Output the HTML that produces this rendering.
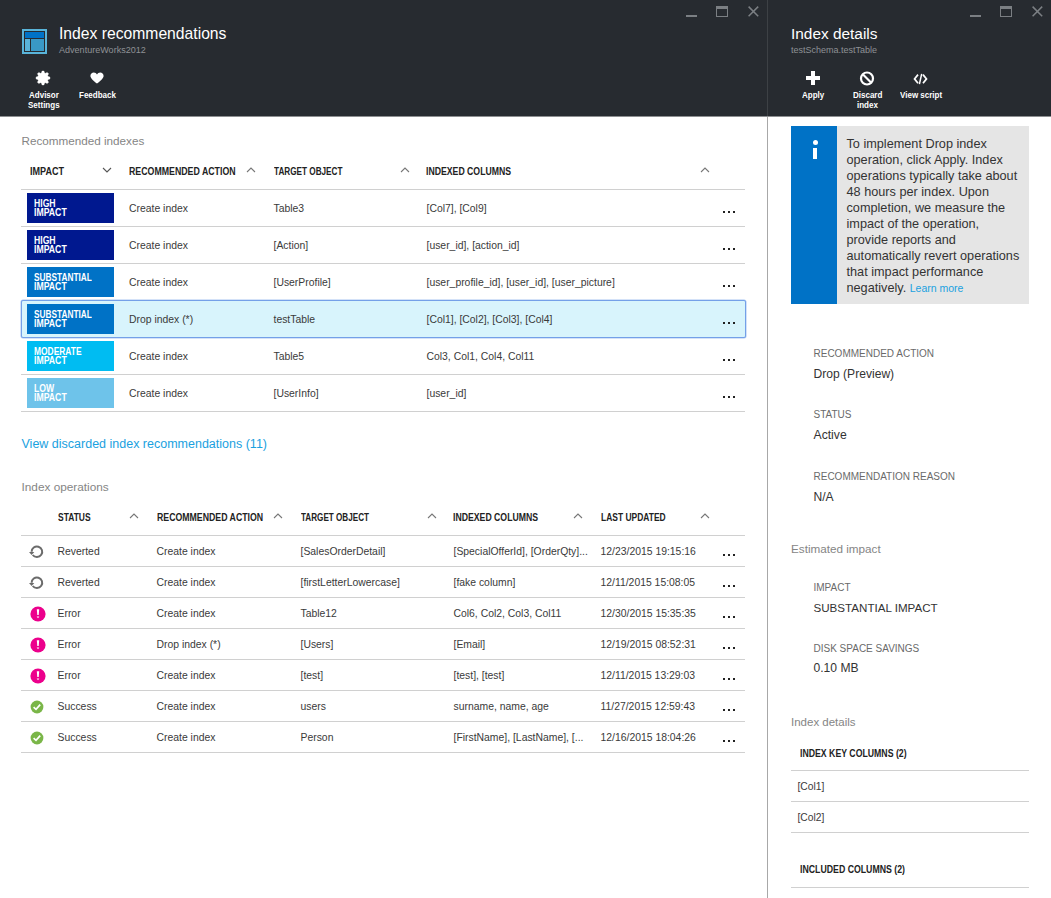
<!DOCTYPE html>
<html><head><meta charset="utf-8"><style>
html,body{margin:0;padding:0;}
body{width:1051px;height:898px;position:relative;overflow:hidden;background:#fff;font-family:"Liberation Sans", sans-serif;}
</style></head><body>
<div style="position:absolute;left:0px;top:0px;width:1051px;height:116px;background:#272b30;"></div>
<div style="position:absolute;left:0px;top:116px;width:1051px;height:1px;background:#8d8f91;"></div>
<div style="position:absolute;left:767px;top:0px;width:1px;height:116px;background:#3d4145;"></div>
<div style="position:absolute;left:767px;top:117px;width:1px;height:781px;background:#a8a8a8;"></div>
<div style="position:absolute;left:686px;top:14.8px;width:11px;height:1.8px;background:#7b7f83;"></div>
<div style="position:absolute;left:716px;top:6px;width:10px;height:6.5px;border:1.5px solid #7b7f83;border-top-width:3px"></div>
<svg style="position:absolute;left:747px;top:5px" width="13" height="13" viewBox="0 0 13 13"><path d="M1.6 1.6L11.2 11.2M11.2 1.6L1.6 11.2" stroke="#7b7f83" stroke-width="1.5"/></svg>
<div style="position:absolute;left:970px;top:14.8px;width:11px;height:1.8px;background:#7b7f83;"></div>
<div style="position:absolute;left:1000px;top:6px;width:10px;height:6.5px;border:1.5px solid #7b7f83;border-top-width:3px"></div>
<svg style="position:absolute;left:1031px;top:5px" width="13" height="13" viewBox="0 0 13 13"><path d="M1.6 1.6L11.2 11.2M11.2 1.6L1.6 11.2" stroke="#7b7f83" stroke-width="1.5"/></svg>
<svg style="position:absolute;left:22px;top:29px" width="25" height="25" viewBox="0 0 25 25">
<rect x="0" y="0" width="25" height="25" fill="#59b4d9"/>
<rect x="2" y="2" width="21" height="21" fill="#272b30"/>
<rect x="3" y="3" width="19" height="6" fill="#0072c6"/>
<rect x="3" y="10" width="5" height="12" fill="#59b4d9"/>
<rect x="9" y="10" width="13" height="12" fill="#3999c6"/>
</svg>
<div style="position:absolute;left:59px;top:25px;font-size:15.7px;line-height:17px;font-weight:400;color:#ffffff;white-space:nowrap;">Index recommendations</div>
<div style="position:absolute;left:59px;top:45px;font-size:9.05px;line-height:10px;font-weight:400;color:#8e9195;white-space:nowrap;">AdventureWorks2012</div>
<svg style="position:absolute;left:35.2px;top:69.9px" width="16" height="16" viewBox="0 0 16 16"><path fill="#fff" stroke="#fff" stroke-width="0.4" stroke-linejoin="round" d="M7.03 1.07 L8.97 1.07 L9.55 2.93 L10.49 3.32 L12.21 2.41 L13.59 3.79 L12.68 5.51 L13.07 6.45 L14.93 7.03 L14.93 8.97 L13.07 9.55 L12.68 10.49 L13.59 12.21 L12.21 13.59 L10.49 12.68 L9.55 13.07 L8.97 14.93 L7.03 14.93 L6.45 13.07 L5.51 12.68 L3.79 13.59 L2.41 12.21 L3.32 10.49 L2.93 9.55 L1.07 8.97 L1.07 7.03 L2.93 6.45 L3.32 5.51 L2.41 3.79 L3.79 2.41 L5.51 3.32 L6.45 2.93 Z"/></svg>
<svg style="position:absolute;left:90px;top:72.4px" width="14" height="13" viewBox="0 0 14 13"><path fill="#fff" d="M7 11.6 C5.2 10 0.4 6.6 0.4 3.9 C0.4 1.9 2 0.4 3.8 0.4 C5.2 0.4 6.4 1.2 7 2.4 C7.6 1.2 8.8 0.4 10.2 0.4 C12 0.4 13.6 1.9 13.6 3.9 C13.6 6.6 8.8 10 7 11.6 Z"/></svg>
<div style="position:absolute;left:28.5px;top:90px;font-size:9px;line-height:10px;font-weight:700;color:#fff;white-space:nowrap;transform:scaleX(0.89);transform-origin:0 0;">Advisor</div>
<div style="position:absolute;left:27.5px;top:100px;font-size:9px;line-height:10px;font-weight:700;color:#fff;white-space:nowrap;transform:scaleX(0.89);transform-origin:0 0;">Settings</div>
<div style="position:absolute;left:79px;top:90px;font-size:9px;line-height:10px;font-weight:700;color:#fff;white-space:nowrap;transform:scaleX(0.89);transform-origin:0 0;">Feedback</div>
<div style="position:absolute;left:791px;top:25px;font-size:15.4px;line-height:17px;font-weight:400;color:#ffffff;white-space:nowrap;">Index details</div>
<div style="position:absolute;left:791px;top:45px;font-size:9px;line-height:10px;font-weight:400;color:#8e9195;white-space:nowrap;">testSchema.testTable</div>
<div style="position:absolute;left:811.3px;top:71px;width:3.6px;height:14px;background:#fff;"></div>
<div style="position:absolute;left:806px;top:76.2px;width:14px;height:3.6px;background:#fff;"></div>
<svg style="position:absolute;left:859px;top:71px" width="16" height="15" viewBox="0 0 16 15"><circle cx="8" cy="7.5" r="6" fill="none" stroke="#fff" stroke-width="2.2"/><path d="M4 3.5L12 11.5" stroke="#fff" stroke-width="2.2"/></svg>
<svg style="position:absolute;left:913px;top:72px" width="17" height="13" viewBox="0 0 17 13"><path d="M5 2.6L1.5 6.9L5 11.2M10 2.6L13.5 6.9L10 11.2" fill="none" stroke="#fff" stroke-width="1.7"/><path d="M8.7 1.8L6.4 12.2" stroke="#fff" stroke-width="1.5"/></svg>
<div style="position:absolute;left:801.5px;top:90px;font-size:9px;line-height:10px;font-weight:700;color:#fff;white-space:nowrap;transform:scaleX(0.89);transform-origin:0 0;">Apply</div>
<div style="position:absolute;left:852.5px;top:90px;font-size:9px;line-height:10px;font-weight:700;color:#fff;white-space:nowrap;transform:scaleX(0.89);transform-origin:0 0;">Discard</div>
<div style="position:absolute;left:857px;top:100px;font-size:9px;line-height:10px;font-weight:700;color:#fff;white-space:nowrap;transform:scaleX(0.89);transform-origin:0 0;">index</div>
<div style="position:absolute;left:899.5px;top:90px;font-size:9px;line-height:10px;font-weight:700;color:#fff;white-space:nowrap;transform:scaleX(0.89);transform-origin:0 0;">View script</div>
<div style="position:absolute;left:21.5px;top:134px;font-size:11.7px;line-height:13px;font-weight:400;color:#858585;white-space:nowrap;">Recommended indexes</div>
<div style="position:absolute;left:30px;top:166px;font-size:10.0px;line-height:11px;font-weight:700;color:#222;white-space:nowrap;transform:scaleX(0.905);transform-origin:0 0;">IMPACT</div>
<svg style="position:absolute;left:102px;top:167px" width="10" height="6" viewBox="0 0 10 6"><path d="M1 1L5 5L9 1" fill="none" stroke="#555" stroke-width="1.1"/></svg>
<div style="position:absolute;left:129px;top:166px;font-size:10.0px;line-height:11px;font-weight:700;color:#222;white-space:nowrap;transform:scaleX(0.879);transform-origin:0 0;">RECOMMENDED ACTION</div>
<svg style="position:absolute;left:246px;top:167px" width="10" height="6" viewBox="0 0 10 6"><path d="M1 5L5 1L9 5" fill="none" stroke="#777" stroke-width="1.1"/></svg>
<div style="position:absolute;left:273.5px;top:166px;font-size:10.0px;line-height:11px;font-weight:700;color:#222;white-space:nowrap;transform:scaleX(0.818);transform-origin:0 0;">TARGET OBJECT</div>
<svg style="position:absolute;left:399.5px;top:167px" width="10" height="6" viewBox="0 0 10 6"><path d="M1 5L5 1L9 5" fill="none" stroke="#777" stroke-width="1.1"/></svg>
<div style="position:absolute;left:426px;top:166px;font-size:10.0px;line-height:11px;font-weight:700;color:#222;white-space:nowrap;transform:scaleX(0.87);transform-origin:0 0;">INDEXED COLUMNS</div>
<svg style="position:absolute;left:699.5px;top:167px" width="10" height="6" viewBox="0 0 10 6"><path d="M1 5L5 1L9 5" fill="none" stroke="#777" stroke-width="1.1"/></svg>
<div style="position:absolute;left:21px;top:189px;width:724px;height:1px;background:#d0d0d0;"></div>
<div style="position:absolute;left:27px;top:193px;width:87px;height:30px;background:#00188f;"></div>
<div style="position:absolute;left:34px;top:198px;font-size:10.0px;line-height:11px;font-weight:700;color:#fff;white-space:nowrap;transform:scaleX(0.864);transform-origin:0 0;">HIGH</div>
<div style="position:absolute;left:34px;top:207px;font-size:10.0px;line-height:11px;font-weight:700;color:#fff;white-space:nowrap;transform:scaleX(0.87);transform-origin:0 0;">IMPACT</div>
<div style="position:absolute;left:129px;top:203px;font-size:10.4px;line-height:11px;font-weight:400;color:#3a3a3a;white-space:nowrap;">Create index</div>
<div style="position:absolute;left:273.5px;top:203px;font-size:10.4px;line-height:11px;font-weight:400;color:#3a3a3a;white-space:nowrap;">Table3</div>
<div style="position:absolute;left:426.5px;top:203px;font-size:10.4px;line-height:11px;font-weight:400;color:#3a3a3a;white-space:nowrap;">[Col7], [Col9]</div>
<div style="position:absolute;left:722.7px;top:211px;width:2px;height:2px;background:#222;"></div>
<div style="position:absolute;left:727.7px;top:211px;width:2px;height:2px;background:#222;"></div>
<div style="position:absolute;left:732.7px;top:211px;width:2px;height:2px;background:#222;"></div>
<div style="position:absolute;left:21px;top:226px;width:724px;height:1px;background:#d0d0d0;"></div>
<div style="position:absolute;left:27px;top:230px;width:87px;height:30px;background:#00188f;"></div>
<div style="position:absolute;left:34px;top:235px;font-size:10.0px;line-height:11px;font-weight:700;color:#fff;white-space:nowrap;transform:scaleX(0.864);transform-origin:0 0;">HIGH</div>
<div style="position:absolute;left:34px;top:244px;font-size:10.0px;line-height:11px;font-weight:700;color:#fff;white-space:nowrap;transform:scaleX(0.87);transform-origin:0 0;">IMPACT</div>
<div style="position:absolute;left:129px;top:240px;font-size:10.4px;line-height:11px;font-weight:400;color:#3a3a3a;white-space:nowrap;">Create index</div>
<div style="position:absolute;left:273.5px;top:240px;font-size:10.4px;line-height:11px;font-weight:400;color:#3a3a3a;white-space:nowrap;">[Action]</div>
<div style="position:absolute;left:426.5px;top:240px;font-size:10.4px;line-height:11px;font-weight:400;color:#3a3a3a;white-space:nowrap;">[user_id], [action_id]</div>
<div style="position:absolute;left:722.7px;top:248px;width:2px;height:2px;background:#222;"></div>
<div style="position:absolute;left:727.7px;top:248px;width:2px;height:2px;background:#222;"></div>
<div style="position:absolute;left:732.7px;top:248px;width:2px;height:2px;background:#222;"></div>
<div style="position:absolute;left:21px;top:263px;width:724px;height:1px;background:#d0d0d0;"></div>
<div style="position:absolute;left:27px;top:267px;width:87px;height:30px;background:#0072c6;"></div>
<div style="position:absolute;left:34px;top:272px;font-size:10.0px;line-height:11px;font-weight:700;color:#fff;white-space:nowrap;transform:scaleX(0.82848);transform-origin:0 0;">SUBSTANTIAL</div>
<div style="position:absolute;left:34px;top:281px;font-size:10.0px;line-height:11px;font-weight:700;color:#fff;white-space:nowrap;transform:scaleX(0.87);transform-origin:0 0;">IMPACT</div>
<div style="position:absolute;left:129px;top:277px;font-size:10.4px;line-height:11px;font-weight:400;color:#3a3a3a;white-space:nowrap;">Create index</div>
<div style="position:absolute;left:273.5px;top:277px;font-size:10.4px;line-height:11px;font-weight:400;color:#3a3a3a;white-space:nowrap;">[UserProfile]</div>
<div style="position:absolute;left:426.5px;top:277px;font-size:10.4px;line-height:11px;font-weight:400;color:#3a3a3a;white-space:nowrap;">[user_profile_id], [user_id], [user_picture]</div>
<div style="position:absolute;left:722.7px;top:285px;width:2px;height:2px;background:#222;"></div>
<div style="position:absolute;left:727.7px;top:285px;width:2px;height:2px;background:#222;"></div>
<div style="position:absolute;left:732.7px;top:285px;width:2px;height:2px;background:#222;"></div>
<div style="position:absolute;left:21px;top:300px;width:723px;height:36px;background:#d8f4fc;border:1px solid #74a0e8;box-shadow:0 0 0 0.5px #a9c6f2;border-radius:2px"></div>
<div style="position:absolute;left:27px;top:304px;width:87px;height:30px;background:#0072c6;"></div>
<div style="position:absolute;left:34px;top:309px;font-size:10.0px;line-height:11px;font-weight:700;color:#fff;white-space:nowrap;transform:scaleX(0.82848);transform-origin:0 0;">SUBSTANTIAL</div>
<div style="position:absolute;left:34px;top:318px;font-size:10.0px;line-height:11px;font-weight:700;color:#fff;white-space:nowrap;transform:scaleX(0.87);transform-origin:0 0;">IMPACT</div>
<div style="position:absolute;left:129px;top:314px;font-size:10.4px;line-height:11px;font-weight:400;color:#3a3a3a;white-space:nowrap;">Drop index (*)</div>
<div style="position:absolute;left:273.5px;top:314px;font-size:10.4px;line-height:11px;font-weight:400;color:#3a3a3a;white-space:nowrap;">testTable</div>
<div style="position:absolute;left:426.5px;top:314px;font-size:10.4px;line-height:11px;font-weight:400;color:#3a3a3a;white-space:nowrap;">[Col1], [Col2], [Col3], [Col4]</div>
<div style="position:absolute;left:722.7px;top:322px;width:2px;height:2px;background:#222;"></div>
<div style="position:absolute;left:727.7px;top:322px;width:2px;height:2px;background:#222;"></div>
<div style="position:absolute;left:732.7px;top:322px;width:2px;height:2px;background:#222;"></div>
<div style="position:absolute;left:27px;top:341px;width:87px;height:30px;background:#00bcf2;"></div>
<div style="position:absolute;left:34px;top:346px;font-size:10.0px;line-height:11px;font-weight:700;color:#fff;white-space:nowrap;transform:scaleX(0.84192);transform-origin:0 0;">MODERATE</div>
<div style="position:absolute;left:34px;top:355px;font-size:10.0px;line-height:11px;font-weight:700;color:#fff;white-space:nowrap;transform:scaleX(0.87);transform-origin:0 0;">IMPACT</div>
<div style="position:absolute;left:129px;top:351px;font-size:10.4px;line-height:11px;font-weight:400;color:#3a3a3a;white-space:nowrap;">Create index</div>
<div style="position:absolute;left:273.5px;top:351px;font-size:10.4px;line-height:11px;font-weight:400;color:#3a3a3a;white-space:nowrap;">Table5</div>
<div style="position:absolute;left:426.5px;top:351px;font-size:10.4px;line-height:11px;font-weight:400;color:#3a3a3a;white-space:nowrap;">Col3, Col1, Col4, Col11</div>
<div style="position:absolute;left:722.7px;top:359px;width:2px;height:2px;background:#222;"></div>
<div style="position:absolute;left:727.7px;top:359px;width:2px;height:2px;background:#222;"></div>
<div style="position:absolute;left:732.7px;top:359px;width:2px;height:2px;background:#222;"></div>
<div style="position:absolute;left:21px;top:374px;width:724px;height:1px;background:#d0d0d0;"></div>
<div style="position:absolute;left:27px;top:378px;width:87px;height:30px;background:#6ec3ea;"></div>
<div style="position:absolute;left:34px;top:383px;font-size:10.0px;line-height:11px;font-weight:700;color:#fff;white-space:nowrap;transform:scaleX(0.864);transform-origin:0 0;">LOW</div>
<div style="position:absolute;left:34px;top:392px;font-size:10.0px;line-height:11px;font-weight:700;color:#fff;white-space:nowrap;transform:scaleX(0.87);transform-origin:0 0;">IMPACT</div>
<div style="position:absolute;left:129px;top:388px;font-size:10.4px;line-height:11px;font-weight:400;color:#3a3a3a;white-space:nowrap;">Create index</div>
<div style="position:absolute;left:273.5px;top:388px;font-size:10.4px;line-height:11px;font-weight:400;color:#3a3a3a;white-space:nowrap;">[UserInfo]</div>
<div style="position:absolute;left:426.5px;top:388px;font-size:10.4px;line-height:11px;font-weight:400;color:#3a3a3a;white-space:nowrap;">[user_id]</div>
<div style="position:absolute;left:722.7px;top:396px;width:2px;height:2px;background:#222;"></div>
<div style="position:absolute;left:727.7px;top:396px;width:2px;height:2px;background:#222;"></div>
<div style="position:absolute;left:732.7px;top:396px;width:2px;height:2px;background:#222;"></div>
<div style="position:absolute;left:21px;top:411px;width:724px;height:1px;background:#d0d0d0;"></div>
<div style="position:absolute;left:21.5px;top:437px;font-size:12.5px;line-height:14px;font-weight:400;color:#1aa1e0;white-space:nowrap;">View discarded index recommendations (11)</div>
<div style="position:absolute;left:21.5px;top:480px;font-size:11.8px;line-height:14px;font-weight:400;color:#858585;white-space:nowrap;">Index operations</div>
<div style="position:absolute;left:57.5px;top:512px;font-size:10.0px;line-height:11px;font-weight:700;color:#222;white-space:nowrap;transform:scaleX(0.845);transform-origin:0 0;">STATUS</div>
<svg style="position:absolute;left:129px;top:513px" width="10" height="6" viewBox="0 0 10 6"><path d="M1 5L5 1L9 5" fill="none" stroke="#777" stroke-width="1.1"/></svg>
<div style="position:absolute;left:156.5px;top:512px;font-size:10.0px;line-height:11px;font-weight:700;color:#222;white-space:nowrap;transform:scaleX(0.875);transform-origin:0 0;">RECOMMENDED ACTION</div>
<svg style="position:absolute;left:273px;top:513px" width="10" height="6" viewBox="0 0 10 6"><path d="M1 5L5 1L9 5" fill="none" stroke="#777" stroke-width="1.1"/></svg>
<div style="position:absolute;left:300.5px;top:512px;font-size:10.0px;line-height:11px;font-weight:700;color:#222;white-space:nowrap;transform:scaleX(0.812);transform-origin:0 0;">TARGET OBJECT</div>
<svg style="position:absolute;left:426.5px;top:513px" width="10" height="6" viewBox="0 0 10 6"><path d="M1 5L5 1L9 5" fill="none" stroke="#777" stroke-width="1.1"/></svg>
<div style="position:absolute;left:453px;top:512px;font-size:10.0px;line-height:11px;font-weight:700;color:#222;white-space:nowrap;transform:scaleX(0.87);transform-origin:0 0;">INDEXED COLUMNS</div>
<svg style="position:absolute;left:573px;top:513px" width="10" height="6" viewBox="0 0 10 6"><path d="M1 5L5 1L9 5" fill="none" stroke="#777" stroke-width="1.1"/></svg>
<div style="position:absolute;left:600.5px;top:512px;font-size:10.0px;line-height:11px;font-weight:700;color:#222;white-space:nowrap;transform:scaleX(0.845);transform-origin:0 0;">LAST UPDATED</div>
<svg style="position:absolute;left:699.5px;top:513px" width="10" height="6" viewBox="0 0 10 6"><path d="M1 5L5 1L9 5" fill="none" stroke="#777" stroke-width="1.1"/></svg>
<div style="position:absolute;left:21px;top:535px;width:724px;height:1px;background:#d0d0d0;"></div>
<svg style="position:absolute;left:29px;top:544px" width="15" height="15" viewBox="0 0 15 15"><path d="M2.6 7.8 A5.3 5.3 0 1 1 3.7 11.0" fill="none" stroke="#6b6b6b" stroke-width="2"/><path d="M0 8.0 L5.3 8.0 L2.65 11.1 Z" fill="#6b6b6b"/></svg>
<div style="position:absolute;left:57.5px;top:546px;font-size:10.4px;line-height:11px;font-weight:400;color:#3a3a3a;white-space:nowrap;">Reverted</div>
<div style="position:absolute;left:156.5px;top:546px;font-size:10.4px;line-height:11px;font-weight:400;color:#3a3a3a;white-space:nowrap;">Create index</div>
<div style="position:absolute;left:300.5px;top:546px;font-size:10.4px;line-height:11px;font-weight:400;color:#3a3a3a;white-space:nowrap;">[SalesOrderDetail]</div>
<div style="position:absolute;left:453.5px;top:546px;font-size:10.4px;line-height:11px;font-weight:400;color:#3a3a3a;white-space:nowrap;">[SpecialOfferId], [OrderQty]...</div>
<div style="position:absolute;left:600.5px;top:546px;font-size:10.4px;line-height:11px;font-weight:400;color:#3a3a3a;white-space:nowrap;">12/23/2015 19:15:16</div>
<div style="position:absolute;left:722.7px;top:554px;width:2px;height:2px;background:#222;"></div>
<div style="position:absolute;left:727.7px;top:554px;width:2px;height:2px;background:#222;"></div>
<div style="position:absolute;left:732.7px;top:554px;width:2px;height:2px;background:#222;"></div>
<div style="position:absolute;left:21px;top:566px;width:724px;height:1px;background:#d0d0d0;"></div>
<svg style="position:absolute;left:29px;top:575px" width="15" height="15" viewBox="0 0 15 15"><path d="M2.6 7.8 A5.3 5.3 0 1 1 3.7 11.0" fill="none" stroke="#6b6b6b" stroke-width="2"/><path d="M0 8.0 L5.3 8.0 L2.65 11.1 Z" fill="#6b6b6b"/></svg>
<div style="position:absolute;left:57.5px;top:577px;font-size:10.4px;line-height:11px;font-weight:400;color:#3a3a3a;white-space:nowrap;">Reverted</div>
<div style="position:absolute;left:156.5px;top:577px;font-size:10.4px;line-height:11px;font-weight:400;color:#3a3a3a;white-space:nowrap;">Create index</div>
<div style="position:absolute;left:300.5px;top:577px;font-size:10.4px;line-height:11px;font-weight:400;color:#3a3a3a;white-space:nowrap;">[firstLetterLowercase]</div>
<div style="position:absolute;left:453.5px;top:577px;font-size:10.4px;line-height:11px;font-weight:400;color:#3a3a3a;white-space:nowrap;">[fake column]</div>
<div style="position:absolute;left:600.5px;top:577px;font-size:10.4px;line-height:11px;font-weight:400;color:#3a3a3a;white-space:nowrap;">12/11/2015 15:08:05</div>
<div style="position:absolute;left:722.7px;top:585px;width:2px;height:2px;background:#222;"></div>
<div style="position:absolute;left:727.7px;top:585px;width:2px;height:2px;background:#222;"></div>
<div style="position:absolute;left:732.7px;top:585px;width:2px;height:2px;background:#222;"></div>
<div style="position:absolute;left:21px;top:597px;width:724px;height:1px;background:#d0d0d0;"></div>
<svg style="position:absolute;left:29.8px;top:605.8px" width="16" height="16" viewBox="0 0 16 16"><circle cx="8" cy="8" r="7.6" fill="#ec008c"/><path d="M6.8 3.3H9.2L8.7 9H7.3Z" fill="#fff"/><path d="M6.7 10.5H9.3L8 12.3Z" fill="#fff"/></svg>
<div style="position:absolute;left:57.5px;top:608px;font-size:10.4px;line-height:11px;font-weight:400;color:#3a3a3a;white-space:nowrap;">Error</div>
<div style="position:absolute;left:156.5px;top:608px;font-size:10.4px;line-height:11px;font-weight:400;color:#3a3a3a;white-space:nowrap;">Create index</div>
<div style="position:absolute;left:300.5px;top:608px;font-size:10.4px;line-height:11px;font-weight:400;color:#3a3a3a;white-space:nowrap;">Table12</div>
<div style="position:absolute;left:453.5px;top:608px;font-size:10.4px;line-height:11px;font-weight:400;color:#3a3a3a;white-space:nowrap;">Col6, Col2, Col3, Col11</div>
<div style="position:absolute;left:600.5px;top:608px;font-size:10.4px;line-height:11px;font-weight:400;color:#3a3a3a;white-space:nowrap;">12/30/2015 15:35:35</div>
<div style="position:absolute;left:722.7px;top:616px;width:2px;height:2px;background:#222;"></div>
<div style="position:absolute;left:727.7px;top:616px;width:2px;height:2px;background:#222;"></div>
<div style="position:absolute;left:732.7px;top:616px;width:2px;height:2px;background:#222;"></div>
<div style="position:absolute;left:21px;top:628px;width:724px;height:1px;background:#d0d0d0;"></div>
<svg style="position:absolute;left:29.8px;top:636.8px" width="16" height="16" viewBox="0 0 16 16"><circle cx="8" cy="8" r="7.6" fill="#ec008c"/><path d="M6.8 3.3H9.2L8.7 9H7.3Z" fill="#fff"/><path d="M6.7 10.5H9.3L8 12.3Z" fill="#fff"/></svg>
<div style="position:absolute;left:57.5px;top:639px;font-size:10.4px;line-height:11px;font-weight:400;color:#3a3a3a;white-space:nowrap;">Error</div>
<div style="position:absolute;left:156.5px;top:639px;font-size:10.4px;line-height:11px;font-weight:400;color:#3a3a3a;white-space:nowrap;">Drop index (*)</div>
<div style="position:absolute;left:300.5px;top:639px;font-size:10.4px;line-height:11px;font-weight:400;color:#3a3a3a;white-space:nowrap;">[Users]</div>
<div style="position:absolute;left:453.5px;top:639px;font-size:10.4px;line-height:11px;font-weight:400;color:#3a3a3a;white-space:nowrap;">[Email]</div>
<div style="position:absolute;left:600.5px;top:639px;font-size:10.4px;line-height:11px;font-weight:400;color:#3a3a3a;white-space:nowrap;">12/19/2015 08:52:31</div>
<div style="position:absolute;left:722.7px;top:647px;width:2px;height:2px;background:#222;"></div>
<div style="position:absolute;left:727.7px;top:647px;width:2px;height:2px;background:#222;"></div>
<div style="position:absolute;left:732.7px;top:647px;width:2px;height:2px;background:#222;"></div>
<div style="position:absolute;left:21px;top:659px;width:724px;height:1px;background:#d0d0d0;"></div>
<svg style="position:absolute;left:29.8px;top:667.8px" width="16" height="16" viewBox="0 0 16 16"><circle cx="8" cy="8" r="7.6" fill="#ec008c"/><path d="M6.8 3.3H9.2L8.7 9H7.3Z" fill="#fff"/><path d="M6.7 10.5H9.3L8 12.3Z" fill="#fff"/></svg>
<div style="position:absolute;left:57.5px;top:670px;font-size:10.4px;line-height:11px;font-weight:400;color:#3a3a3a;white-space:nowrap;">Error</div>
<div style="position:absolute;left:156.5px;top:670px;font-size:10.4px;line-height:11px;font-weight:400;color:#3a3a3a;white-space:nowrap;">Create index</div>
<div style="position:absolute;left:300.5px;top:670px;font-size:10.4px;line-height:11px;font-weight:400;color:#3a3a3a;white-space:nowrap;">[test]</div>
<div style="position:absolute;left:453.5px;top:670px;font-size:10.4px;line-height:11px;font-weight:400;color:#3a3a3a;white-space:nowrap;">[test], [test]</div>
<div style="position:absolute;left:600.5px;top:670px;font-size:10.4px;line-height:11px;font-weight:400;color:#3a3a3a;white-space:nowrap;">12/11/2015 13:29:03</div>
<div style="position:absolute;left:722.7px;top:678px;width:2px;height:2px;background:#222;"></div>
<div style="position:absolute;left:727.7px;top:678px;width:2px;height:2px;background:#222;"></div>
<div style="position:absolute;left:732.7px;top:678px;width:2px;height:2px;background:#222;"></div>
<div style="position:absolute;left:21px;top:690px;width:724px;height:1px;background:#d0d0d0;"></div>
<svg style="position:absolute;left:30px;top:699.7px" width="14" height="14" viewBox="0 0 14 14"><circle cx="7" cy="7" r="6.4" fill="#7ab648"/><path d="M3.6 7.2L6 9.4L10.2 4.6" fill="none" stroke="#fff" stroke-width="1.7"/></svg>
<div style="position:absolute;left:57.5px;top:701px;font-size:10.4px;line-height:11px;font-weight:400;color:#3a3a3a;white-space:nowrap;">Success</div>
<div style="position:absolute;left:156.5px;top:701px;font-size:10.4px;line-height:11px;font-weight:400;color:#3a3a3a;white-space:nowrap;">Create index</div>
<div style="position:absolute;left:300.5px;top:701px;font-size:10.4px;line-height:11px;font-weight:400;color:#3a3a3a;white-space:nowrap;">users</div>
<div style="position:absolute;left:453.5px;top:701px;font-size:10.4px;line-height:11px;font-weight:400;color:#3a3a3a;white-space:nowrap;">surname, name, age</div>
<div style="position:absolute;left:600.5px;top:701px;font-size:10.4px;line-height:11px;font-weight:400;color:#3a3a3a;white-space:nowrap;">11/27/2015 12:59:43</div>
<div style="position:absolute;left:722.7px;top:709px;width:2px;height:2px;background:#222;"></div>
<div style="position:absolute;left:727.7px;top:709px;width:2px;height:2px;background:#222;"></div>
<div style="position:absolute;left:732.7px;top:709px;width:2px;height:2px;background:#222;"></div>
<div style="position:absolute;left:21px;top:721px;width:724px;height:1px;background:#d0d0d0;"></div>
<svg style="position:absolute;left:30px;top:730.7px" width="14" height="14" viewBox="0 0 14 14"><circle cx="7" cy="7" r="6.4" fill="#7ab648"/><path d="M3.6 7.2L6 9.4L10.2 4.6" fill="none" stroke="#fff" stroke-width="1.7"/></svg>
<div style="position:absolute;left:57.5px;top:732px;font-size:10.4px;line-height:11px;font-weight:400;color:#3a3a3a;white-space:nowrap;">Success</div>
<div style="position:absolute;left:156.5px;top:732px;font-size:10.4px;line-height:11px;font-weight:400;color:#3a3a3a;white-space:nowrap;">Create index</div>
<div style="position:absolute;left:300.5px;top:732px;font-size:10.4px;line-height:11px;font-weight:400;color:#3a3a3a;white-space:nowrap;">Person</div>
<div style="position:absolute;left:453.5px;top:732px;font-size:10.4px;line-height:11px;font-weight:400;color:#3a3a3a;white-space:nowrap;">[FirstName], [LastName], [...</div>
<div style="position:absolute;left:600.5px;top:732px;font-size:10.4px;line-height:11px;font-weight:400;color:#3a3a3a;white-space:nowrap;">12/16/2015 18:04:26</div>
<div style="position:absolute;left:722.7px;top:740px;width:2px;height:2px;background:#222;"></div>
<div style="position:absolute;left:727.7px;top:740px;width:2px;height:2px;background:#222;"></div>
<div style="position:absolute;left:732.7px;top:740px;width:2px;height:2px;background:#222;"></div>
<div style="position:absolute;left:21px;top:752px;width:724px;height:1px;background:#d0d0d0;"></div>
<div style="position:absolute;left:791px;top:126px;width:46px;height:178px;background:#0072c6;"></div>
<div style="position:absolute;left:837px;top:126px;width:192px;height:178px;background:#e5e5e5;"></div>
<div style="position:absolute;left:812.5px;top:140px;width:5px;height:5px;border-radius:50%;background:#fff"></div>
<div style="position:absolute;left:812.5px;top:147.5px;width:4.5px;height:11.5px;background:#fff;"></div>
<div style="position:absolute;left:846.5px;top:137px;font-size:12.7px;line-height:14px;font-weight:400;color:#333;white-space:nowrap;">To implement Drop index</div>
<div style="position:absolute;left:846.5px;top:153px;font-size:12.7px;line-height:14px;font-weight:400;color:#333;white-space:nowrap;">operation, click Apply. Index</div>
<div style="position:absolute;left:846.5px;top:169px;font-size:12.7px;line-height:14px;font-weight:400;color:#333;white-space:nowrap;">operations typically take about</div>
<div style="position:absolute;left:846.5px;top:185px;font-size:12.7px;line-height:14px;font-weight:400;color:#333;white-space:nowrap;">48 hours per index. Upon</div>
<div style="position:absolute;left:846.5px;top:201px;font-size:12.7px;line-height:14px;font-weight:400;color:#333;white-space:nowrap;">completion, we measure the</div>
<div style="position:absolute;left:846.5px;top:217px;font-size:12.7px;line-height:14px;font-weight:400;color:#333;white-space:nowrap;">impact of the operation,</div>
<div style="position:absolute;left:846.5px;top:233px;font-size:12.7px;line-height:14px;font-weight:400;color:#333;white-space:nowrap;">provide reports and</div>
<div style="position:absolute;left:846.5px;top:249px;font-size:12.7px;line-height:14px;font-weight:400;color:#333;white-space:nowrap;">automatically revert operations</div>
<div style="position:absolute;left:846.5px;top:265px;font-size:12.7px;line-height:14px;font-weight:400;color:#333;white-space:nowrap;">that impact performance</div>
<div style="position:absolute;left:846.5px;top:281px;font-size:12.7px;line-height:14px;font-weight:400;color:#333;white-space:nowrap;">negatively. <span style="font-size:10.5px;color:#1aa1e0">Learn more</span></div>
<div style="position:absolute;left:813.5px;top:348px;font-size:10px;line-height:11px;font-weight:400;color:#6a6a6a;white-space:nowrap;">RECOMMENDED ACTION</div>
<div style="position:absolute;left:813.5px;top:367px;font-size:12.1px;line-height:14px;font-weight:400;color:#333;white-space:nowrap;">Drop (Preview)</div>
<div style="position:absolute;left:813.5px;top:409px;font-size:10px;line-height:11px;font-weight:400;color:#6a6a6a;white-space:nowrap;">STATUS</div>
<div style="position:absolute;left:813.5px;top:428px;font-size:12.2px;line-height:14px;font-weight:400;color:#333;white-space:nowrap;">Active</div>
<div style="position:absolute;left:813.5px;top:471px;font-size:10px;line-height:11px;font-weight:400;color:#6a6a6a;white-space:nowrap;">RECOMMENDATION REASON</div>
<div style="position:absolute;left:813.5px;top:490px;font-size:12.1px;line-height:14px;font-weight:400;color:#333;white-space:nowrap;">N/A</div>
<div style="position:absolute;left:791px;top:542px;font-size:11.7px;line-height:13px;font-weight:400;color:#858585;white-space:nowrap;">Estimated impact</div>
<div style="position:absolute;left:813.5px;top:582px;font-size:10px;line-height:11px;font-weight:400;color:#6a6a6a;white-space:nowrap;">IMPACT</div>
<div style="position:absolute;left:813.5px;top:602px;font-size:11.6px;line-height:12px;font-weight:400;color:#333;white-space:nowrap;">SUBSTANTIAL IMPACT</div>
<div style="position:absolute;left:813.5px;top:643px;font-size:10px;line-height:11px;font-weight:400;color:#6a6a6a;white-space:nowrap;">DISK SPACE SAVINGS</div>
<div style="position:absolute;left:813.5px;top:661px;font-size:12.1px;line-height:14px;font-weight:400;color:#333;white-space:nowrap;">0.10 MB</div>
<div style="position:absolute;left:791px;top:716px;font-size:11.5px;line-height:12px;font-weight:400;color:#858585;white-space:nowrap;">Index details</div>
<div style="position:absolute;left:800px;top:748px;font-size:10.0px;line-height:11px;font-weight:700;color:#222;white-space:nowrap;transform:scaleX(0.873);transform-origin:0 0;">INDEX KEY COLUMNS (2)</div>
<div style="position:absolute;left:791px;top:770px;width:238px;height:1px;background:#d0d0d0;"></div>
<div style="position:absolute;left:797.5px;top:781px;font-size:10.3px;line-height:11px;font-weight:400;color:#3a3a3a;white-space:nowrap;">[Col1]</div>
<div style="position:absolute;left:791px;top:801px;width:238px;height:1px;background:#d0d0d0;"></div>
<div style="position:absolute;left:797.5px;top:812px;font-size:10.3px;line-height:11px;font-weight:400;color:#3a3a3a;white-space:nowrap;">[Col2]</div>
<div style="position:absolute;left:791px;top:832px;width:238px;height:1px;background:#d0d0d0;"></div>
<div style="position:absolute;left:800px;top:864px;font-size:10.0px;line-height:11px;font-weight:700;color:#222;white-space:nowrap;transform:scaleX(0.875);transform-origin:0 0;">INCLUDED COLUMNS (2)</div>
<div style="position:absolute;left:791px;top:887px;width:238px;height:1px;background:#d0d0d0;"></div>
</body></html>
